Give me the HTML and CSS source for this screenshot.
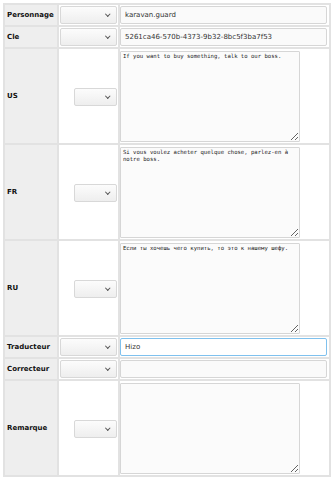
FILE: index.html
```html
<!DOCTYPE html>
<html lang="fr">
<head>
    <meta charset="UTF-8">
    <meta name="viewport" content="width=device-width, initial-scale=1.0">
    <title>Traduction</title>
    <link rel="stylesheet" href="styles.css">
</head>
<body>
    <table class="entry">
        <tr class="short">
            <th>Personnage</th>
            <td class="pick"><span class="sel"><select></select></span></td>
            <td class="val"><input type="text" value="karavan.guard"></td>
        </tr>
        <tr class="short">
            <th>Cle</th>
            <td class="pick"><span class="sel"><select></select></span></td>
            <td class="val"><input type="text" value="5261ca46-570b-4373-9b32-8bc5f3ba7f53"></td>
        </tr>
        <tr class="tall">
            <th>US</th>
            <td class="pick"><span class="sel small"><select></select></span></td>
            <td class="val"><textarea>If you want to buy something, talk to our boss.</textarea></td>
        </tr>
        <tr class="tall">
            <th>FR</th>
            <td class="pick"><span class="sel small"><select></select></span></td>
            <td class="val"><textarea>Si vous voulez acheter quelque chose, parlez-en à notre boss.</textarea></td>
        </tr>
        <tr class="tall">
            <th>RU</th>
            <td class="pick"><span class="sel small"><select></select></span></td>
            <td class="val"><textarea>Если ты хочешь чего купить, то это к нашему шефу.</textarea></td>
        </tr>
        <tr class="short">
            <th>Traducteur</th>
            <td class="pick"><span class="sel"><select></select></span></td>
            <td class="val"><input type="text" class="active" value="Hizo"></td>
        </tr>
        <tr class="short">
            <th>Correcteur</th>
            <td class="pick"><span class="sel"><select></select></span></td>
            <td class="val"><input type="text" value=""></td>
        </tr>
        <tr class="tall last">
            <th>Remarque</th>
            <td class="pick"><span class="sel small"><select></select></span></td>
            <td class="val"><textarea></textarea></td>
        </tr>
    </table>
</body>
</html>
```

FILE: styles.css
```css
body {
    margin: 0;
    padding: 3px;
    background-color: white;
    font-family: "DejaVu Sans", Verdana, sans-serif;
}

.entry {
    border-collapse: collapse;
    width: 328px;
    table-layout: fixed;
}

.entry th,
.entry td {
    border: 2px solid #e2e2e2;
    padding: 0;
    vertical-align: middle;
}

.entry th {
    width: 50px;
    background-color: #eeeeee;
    text-align: left;
    font-size: 7px;
    font-weight: bold;
    color: #111;
    padding-left: 2px;
}

.entry td.pick {
    width: 57px;
    text-align: right;
    padding: 0 1px;
}

.entry td.val {
    padding: 0 2px 0 0;
}

.short {
    height: 22px;
}

.tall {
    height: 96px;
}

.sel {
    position: relative;
    display: block;
    height: 18px;
}

.sel.small {
    display: inline-block;
    width: 43px;
    vertical-align: middle;
}

.sel select {
    -webkit-appearance: none;
    appearance: none;
    width: 100%;
    height: 18px;
    border: 1px solid #d8d8d8;
    border-radius: 2px;
    background: linear-gradient(#fcfcfc, #eeeeee);
    display: block;
}

.sel::after {
    content: "";
    position: absolute;
    right: 8px;
    top: 6px;
    width: 2.5px;
    height: 2.5px;
    border-right: 1.2px solid #555;
    border-bottom: 1.2px solid #555;
    transform: rotate(45deg);
    pointer-events: none;
}

.val input {
    box-sizing: border-box;
    display: block;
    width: 100%;
    height: 18px;
    border: 1px solid #d6d6d6;
    border-radius: 2px;
    background-color: #fafafa;
    padding: 0 4px;
    font-family: "DejaVu Sans", Verdana, sans-serif;
    font-size: 7px;
    color: #333;
}

.val input.active {
    border-color: #7fc1ee;
    background-color: white;
}

.val textarea {
    box-sizing: border-box;
    display: block;
    width: 180px;
    height: 91px;
    margin: 0;
    border: 1px solid #d6d6d6;
    border-radius: 1px;
    background-color: #fbfbfb;
    padding: 1px 2px;
    font-family: "DejaVu Sans Mono", monospace;
    font-size: 5.6px;
    line-height: 7px;
    color: #222;
}
```
